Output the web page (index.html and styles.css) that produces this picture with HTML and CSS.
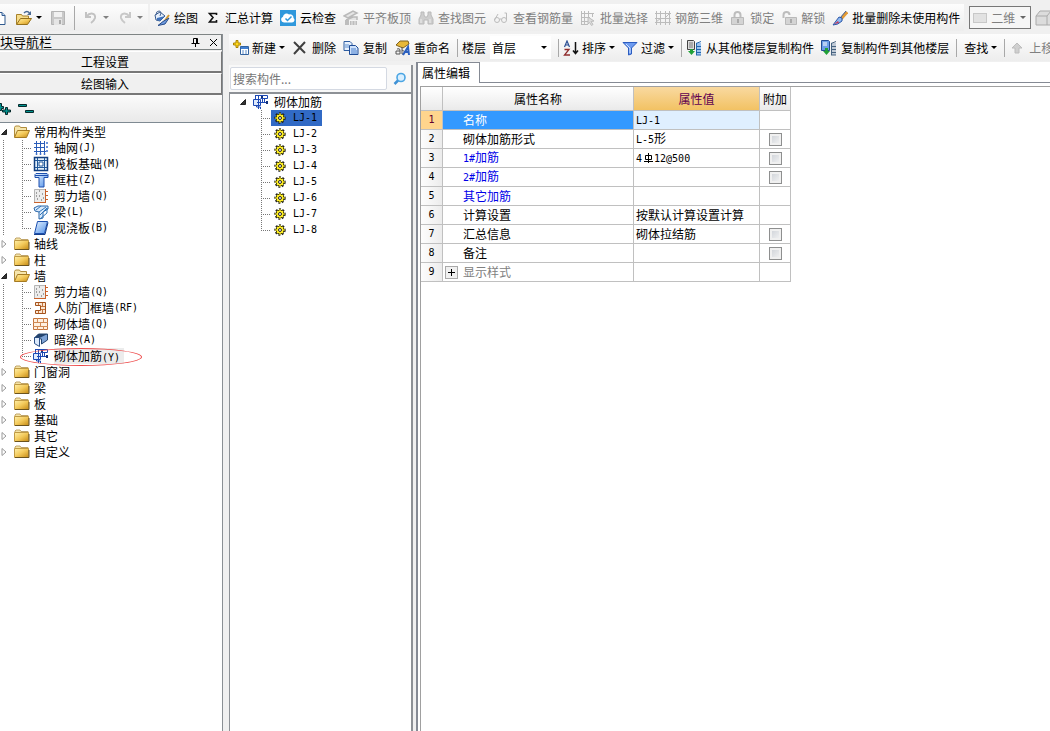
FILE: index.html
```
<!DOCTYPE html>
<html lang="zh-CN">
<head>
<meta charset="utf-8">
<title>属性编辑</title>
<link rel="stylesheet" href="styles.css">
</head>
<body>
<svg class="defs" aria-hidden="true">
  <defs>
    <linearGradient id="gold" x1="0" y1="0" x2="1" y2="1"><stop offset="0" stop-color="#fff0a8"/><stop offset=".5" stop-color="#f3c95a"/><stop offset="1" stop-color="#c58a14"/></linearGradient>
    <linearGradient id="blue" x1="0" y1="0" x2="1" y2="1"><stop offset="0" stop-color="#e8f4ff"/><stop offset="1" stop-color="#4f8fe8"/></linearGradient>
  </defs>
  <symbol id="folder" viewBox="0 0 16 16"><path d="M1 4.500V3l1-1h4l1 1.500h7v2z" fill="#f4e3a4" stroke="#c0a468"/><path d="M.5 4.500h14v9H.5z" fill="url(#gold)" stroke="#c09a44"/><path d="M1 13.500h14V6" stroke="#6b531e" fill="none"/></symbol>
  <symbol id="folder-open" viewBox="0 0 16 16"><path d="M.5 13V3.500l1-1.500h4l1 1.500h6v3" fill="#f6e6ae" stroke="#b08c3c"/><path d="M.5 13.500l3-7h12l-3 7z" fill="url(#gold)" stroke="#a57a22"/></symbol>
  <symbol id="file-open" viewBox="0 0 16 16"><path d="M.5 14V4.500h5l1 1.500h6v3" fill="#f6dc8a" stroke="#a8822a"/><path d="M.5 14.500l4-6h11l-4 6z" fill="url(#gold)" stroke="#94701c"/><path d="M8 3q3-3 5.500 0" fill="none" stroke="#4a6a94" stroke-width="1.500"/><path d="M15 1v4h-4z" fill="#4a6a94"/></symbol>
  <symbol id="doc" viewBox="8 0 8 16"><path d="M0 2.500h10l3 3v9H0z" fill="#fff" stroke="#315a8f"/><path d="M10 2.500v3h3" fill="#b9d2ee" stroke="#315a8f"/></symbol>
  <symbol id="save" viewBox="0 0 16 16"><path d="M1.500 1.500h13v13h-13z" fill="#c9c9c9" stroke="#b5b5b5"/><path d="M4 2h8v5H4z" fill="#f1f1f1"/><path d="M4 9h8v6H4z" fill="#e5e5e5"/><path d="M9 10h2v4H9z" fill="#aaa"/></symbol>
  <symbol id="undo" viewBox="0 0 16 16"><path d="M3 2v5h5M3.500 6.500C7 2 13 3 12 8q-1 3-4 5" fill="none" stroke="#c2c2c2" stroke-width="2"/></symbol>
  <symbol id="redo" viewBox="0 0 16 16"><path d="M13 2v5H8M12.500 6.500C9 2 3 3 4 8q1 3 4 5" fill="none" stroke="#c8c8c8" stroke-width="2"/></symbol>
  <symbol id="paint" viewBox="0 0 16 16"><path d="M1 5l5-3 5 4-5 5-4-1z" fill="#e6effb" stroke="#35588c"/><path d="M2 5q0-4 3-4t1 5" fill="none" stroke="#4c6a98"/><path d="M3 8l8-2-5 5-3-1z" fill="#3e72bd"/><path d="M15 5l-5 7" stroke="#d39a32" stroke-width="2"/><path d="M15 8l-4 6-7 1.500 5-4z" fill="#6f9be0" stroke="#274c8a"/></symbol>
  <symbol id="sigma" viewBox="0 0 16 16"><path d="M11.500 5V3.500H4.500L8 7.500l-3.500 4.500h7v-2" fill="none" stroke="#111" stroke-width="1.600"/></symbol>
  <symbol id="cloud" viewBox="0 0 16 16"><path d="M0 0h16v16H0z" fill="#2f98dc"/><path d="M4 12.500a3 3 0 0 1-1-5.800A3.500 3.500 0 0 1 9 4.500 3.500 3.500 0 0 1 13.500 8 2.500 2.500 0 0 1 12 12.500z" fill="#fff"/><path d="M5.500 8.500l2 2 4-4" fill="none" stroke="#2f98dc" stroke-width="1.500"/></symbol>
  <symbol id="level" viewBox="0 0 16 16"><path d="M1 6l9-5 4 2-9 5zM3 10l7-3h4v3" fill="#e5e5e5" stroke="#b9b9b9" stroke-width="1.500"/><path d="M2 10h4v5H2zM7 11h7v4H7z" fill="#bdbdbd"/><path d="M9 11v4M12 11v4" stroke="#e8e8e8"/></symbol>
  <symbol id="binoc" viewBox="0 0 16 16"><path d="M3 2h3v3l1 2h2l1-2V2h3v3l2 4v5h-5v-4H6v4H1V9l2-4z" fill="#cecece" stroke="#bababa"/><path d="M3 9v4M12 9v4" stroke="#eee"/></symbol>
  <symbol id="glasses" viewBox="0 0 16 16"><circle cx="4" cy="10" r="2.500"/><circle cx="11" cy="10" r="2.500"/><path d="M6.500 9h2M1.500 10L5 4M13.500 10V3h-2"/></symbol>
  <symbol id="batch" viewBox="0 0 16 16"><path d="M1.500 1v14M4.500 1v14M1 3.500h13M1 7.500h9M1 11.500h7M1 14.500h7M8.500 1v6M12.500 3v4"/><path d="M8 7l6 4-3 .5 2 3-1.500 1-2-3L8 14z" fill="#ddd"/></symbol>
  <symbol id="grid3d" viewBox="0 0 16 16"><path d="M1.500 1v14M5.500 1v14M10.500 1v14M14.500 1v14M0 3.500h16M0 8.500h16M0 12.500h16M1 12l5-4M10 8l5-5"/></symbol>
  <symbol id="lock" viewBox="0 0 16 16"><path d="M4.500 8V5q0-3 3-3t3 3v3" fill="none" stroke="#bdbdbd" stroke-width="2"/><path d="M1.500 7.500h12v7h-12z" fill="#d4d4d4" stroke="#b9b9b9"/><path d="M7 9h2v4H7z" fill="#aaa"/></symbol>
  <symbol id="unlock" viewBox="0 0 16 16"><path d="M2.500 8V5q0-3 3-3t3 3" fill="none" stroke="#bdbdbd" stroke-width="2"/><path d="M4.500 7.500h11v7h-11z" fill="#d4d4d4" stroke="#b9b9b9"/><path d="M9 9h2v4H9z" fill="#aaa"/></symbol>
  <symbol id="brush" viewBox="0 0 16 16"><path d="M15 2L9 9" stroke="#e39a34" stroke-width="3"/><path d="M14 1L8 8" stroke="#3b62a0"/><path d="M10 8l-3-1-6 8q5 0 9-4z" fill="#8fb8f0" stroke="#2c58a8"/><path d="M2 14l4-3 1 2z" fill="#c33a5c"/></symbol>
  <symbol id="new" viewBox="0 0 16 16"><path d="M3 .5h2v2.500h2.500v2H5v2.500H3V5H.5V3H3z" fill="#ffd91e" stroke="#ab8300"/><path d="M7.500 6.500h8v8h-8z" fill="#fff" stroke="#33639f"/><path d="M8 7h7v2H8z" fill="#3f7fd2"/><path d="M9 11h2M12 11h2M9 13h2M12 13h2" stroke="#5c8dc9"/></symbol>
  <symbol id="del" viewBox="0 0 16 16"><path d="M2 2l11 11M13 2L2 14" stroke="#404040" stroke-width="2"/></symbol>
  <symbol id="copy" viewBox="0 0 16 16"><path d="M1 1.500h6l2 2v7H1z" fill="#e6f0fd" stroke="#2d5ca0"/><path d="M2 5h4M2 7h4" stroke="#5e90d0"/><path d="M6.500 5.500h6l2.500 2.500v6.500H6.500z" fill="#cfe2fb" stroke="#1f4c96"/><path d="M8 9h5M8 11h6M8 13h6" stroke="#4c80cc"/></symbol>
  <symbol id="rename" viewBox="0 0 16 16"><path d="M2 5l4-4h8l1 3-6 4-5-2z" fill="#e8b839" stroke="#7f6220"/><path d="M3 9q3-1 3 1v4M6 11H2v3h4M8 7v7h2q2-3-2-4" fill="none" stroke="#555"/><path d="M9 15l5-8 1 8M11 12h4" fill="none" stroke="#2b60c0" stroke-width="2"/></symbol>
  <symbol id="sort" viewBox="0 0 16 16"><path d="M1.500 7L4 1l2.500 6M2.500 5h3" fill="none" stroke="#2b4f94" stroke-width="1.200"/><path d="M1.500 9.500H6L1.500 15H7" fill="none" stroke="#8f2c2c" stroke-width="1.300"/><path d="M12.500 2v11M10 10.500l2.500 3 2.500-3" fill="none" stroke="#111" stroke-width="1.500"/></symbol>
  <symbol id="filter" viewBox="0 0 16 16"><path d="M1 2.500h14L9.500 8v6l-3 1V8z" fill="#6d9bf0" stroke="#2b5cc0"/><path d="M4 4l4 4v5" stroke="#d5e5ff" fill="none"/></symbol>
  <symbol id="from-floor" viewBox="0 0 16 16"><path d="M1.500.5h6l1 1v8h-7z" fill="#ddd" stroke="#444"/><path d="M3 3h4M3 5h4M3 7h4" stroke="#777"/><path d="M4 9h3v2h2l-3.500 4L2 11h2z" fill="#21a038"/><path d="M11 3h4v12h-4z" fill="#9cc2ee"/><path d="M10 3.500l5-2M10 6.500h5M10 9.500h5M10 12.500h5M10 15h5M10.500 3v12" stroke="#2367ad"/></symbol>
  <symbol id="to-floor" viewBox="0 0 16 16"><path d="M.5.500h7l1 1v9h-8z" fill="#6c9ee8" stroke="#234c94"/><path d="M2 3h4M2 5h4" stroke="#fff"/><path d="M4 8h3v3h2l-3.500 4L2 11h2z" fill="#21a038"/><path d="M11 3h4v12h-4z" fill="#c0cad6"/><path d="M10 3.500l5-2M10 6.500h5M10 9.500h5M10 12.500h5M10 15h5M10.500 3v12" stroke="#46627f"/></symbol>
  <symbol id="up" viewBox="0 0 16 16"><path d="M8 3l5 5h-3v5H6V8H3z" fill="#cfcfcf" stroke="#bcbcbc"/></symbol>
  <symbol id="cube" viewBox="0 0 16 16"><path d="M1 6l4-5h14v11l-4 3H1z" fill="#dcdcdc" stroke="#aaa"/><path d="M1 6h11v9M12 6l4-5" stroke="#aaa" fill="none"/></symbol>
  <symbol id="axis" viewBox="0 0 16 16"><path d="M3.500 1v12M7.500 1v12M11.500 1v12M1 3.500h11M1 7.500h11M1 11.500h12" stroke="#2b5db8" fill="none"/><path d="M13.500 2.500h1v1h-1zM13.500 6.500h1v1h-1zM13.500 10.500h1v1h-1zM3 13.500h1v1H3zM7 13.500h1v1H7zM11 13.500h1v1h-1z" fill="#fff" stroke="#3c6fca"/></symbol>
  <symbol id="raft" viewBox="0 0 16 16"><path d="M1.500 1.500h13v13h-13z" fill="#e4f0fb" stroke="#123f80" stroke-width="1.500"/><path d="M4.500 2v12M11.500 2v12M2 4.500h12M2 11.500h12" stroke="#1f5799"/><path d="M6 6h4v4H6z" fill="#fff" stroke="#1f5799"/></symbol>
  <symbol id="column" viewBox="0 0 16 16"><path d="M2 2.500l1-1h11l1 1v3h-4V15H6V5.500H2z" fill="url(#blue)" stroke="#1c4fae"/><path d="M2 3.500h13" stroke="#1c4fae"/></symbol>
  <symbol id="shear" viewBox="0 0 16 16"><path d="M1.500 1.500h11v13h-11z" fill="#ececec" stroke="#b5b5b5"/><path d="M3 5h1M6 8h1M9 6h1M4 11h1M8 12h1M10 10h1M6 3h1M3 8h1" stroke="#555"/><path d="M1 14.500h12M12.500 1v13M13 3.500h2M13 7.500h2M13 11.500h2" stroke="#c9622c"/></symbol>
  <symbol id="beam" viewBox="0 0 16 16"><path d="M1 4l4-2h10v3l-5 3v6l-4 1V8L2 7z" fill="#d9e9fb" stroke="#2a66a8"/><path d="M3 6l5-4M6 8l7-5M7 11l7-7M7 15l7-6V4" stroke="#3177bb" fill="none"/></symbol>
  <symbol id="slab" viewBox="0 0 16 16"><path d="M4.500 1.500h10l-3 12h-10z" fill="url(#blue)" stroke="#1c4fae"/><path d="M1 14.500h11l3-12" stroke="#173f8c" fill="none"/></symbol>
  <symbol id="frame" viewBox="0 0 16 16"><path d="M2.500 2.500h10v11h-10v-3h5v-5h-5z" fill="#fae6d2" stroke="#a4521c"/><path d="M8 6.500h4M8 9.500h4M5.500 3v2M5.500 11v2M9.500 3v3M9.500 10v3" stroke="#c4743c"/></symbol>
  <symbol id="brick" viewBox="0 0 16 16"><path d="M.5 2.500h14v11H.5z" fill="#fff0e0" stroke="#c4743c"/><path d="M0 6.500h15M0 10.500h15M4.500 2v4M10.500 2v4M7.500 6v4M4.500 10v4M10.500 10v4" stroke="#d08a54"/></symbol>
  <symbol id="hidden-beam" viewBox="0 0 16 16"><path d="M1.500 6l4-4h9v6l-6 4v-5z" fill="#7ea3d6" stroke="#24446e"/><path d="M1.500 5.500h5v9l-5-3z" fill="#dceafc" stroke="#2a4f86"/><path d="M1.500 5.500l4-3.500h9l-7 3.500z" fill="#24446e"/></symbol>
  <symbol id="masonry" viewBox="0 0 16 16"><path d="M.5 5.500h7v6h-7z" fill="#dfeafc" stroke="#1d49b4"/><path d="M2.500 1.500h12M2.500 1v4M5.500 1v14M7.500 4.500h7v-3M9.500 4v5M11.500 4v5M4 8.500h11M3.500 11v2h4v2" fill="none" stroke="#1d49b4"/><path d="M14 7v3M9 2v2" stroke="#12317c" stroke-width="2"/></symbol>
  <symbol id="gear" viewBox="0 0 12 12"><circle cx="6" cy="6" r="4.800" fill="none" stroke="#222" stroke-width="1.800" stroke-dasharray="2 1.500"/><circle cx="6" cy="6" r="4" fill="#ffee24" stroke="#4c4800"/><path d="M6 1v10M1 6h10M3 3l6 6M9 3l-6 6" stroke="#ffee24"/><circle cx="6" cy="6" r="1.500" fill="#fff" stroke="#222"/></symbol>
  <symbol id="search" viewBox="0 0 14 14"><circle cx="8" cy="5.500" r="4" fill="#d9efff" stroke="#4ba5e3" stroke-width="1.600"/><path d="M5 8.500L1.500 12" stroke="#3f92d6" stroke-width="2.500"/></symbol>
  <symbol id="exp-open" viewBox="0 0 8 8"><path d="M6.500 1.500v5h-5z" fill="#333" stroke="#222"/></symbol>
  <symbol id="exp-closed" viewBox="0 0 8 8"><path d="M2 .5L6 4 2 7.500z" fill="#fff" stroke="#999"/></symbol>
</svg>

<header class="toolbar main-toolbar">
  <div class="file-tools">
    <button class="half" aria-label="新建工程"><svg><use href="#doc"/></svg></button>
    <button class="drop" aria-label="打开"><svg><use href="#file-open"/></svg></button>
    <button aria-label="保存" disabled><svg><use href="#save"/></svg></button>
    <span class="sep"></span>
    <button class="drop" aria-label="撤销" disabled><svg><use href="#undo"/></svg></button>
    <button class="drop" aria-label="恢复" disabled><svg><use href="#redo"/></svg></button>
  </div>
  <div class="tools">
    <button><svg><use href="#paint"/></svg>绘图</button>
    <button><svg><use href="#sigma"/></svg>汇总计算</button>
    <button><svg><use href="#cloud"/></svg>云检查</button>
    <button disabled><svg><use href="#level"/></svg>平齐板顶</button>
    <button disabled><svg><use href="#binoc"/></svg>查找图元</button>
    <button disabled><svg class="line"><use href="#glasses"/></svg>查看钢筋量</button>
    <button disabled><svg class="line"><use href="#batch"/></svg>批量选择</button>
    <button disabled><svg class="line"><use href="#grid3d"/></svg>钢筋三维</button>
    <button disabled><svg><use href="#lock"/></svg>锁定</button>
    <button disabled><svg><use href="#unlock"/></svg>解锁</button>
    <button><svg><use href="#brush"/></svg>批量删除未使用构件</button>
  </div>
  <div class="view-tools">
    <span class="select view-select"><i class="swatch"></i><select aria-label="视图" disabled><option>二维</option></select></span>
    <button aria-label="三维" disabled><svg><use href="#cube"/></svg></button>
  </div>
</header>

<div class="workspace">
  <aside class="nav">
    <div class="nav-title"><h2>块导航栏</h2>
      <button aria-label="固定"><svg viewBox="0 0 9 9"><path d="M2.500 5V.5h4V5M.5 5.500h8M4.500 6v3M5.500 1v4" fill="none" stroke="#000"/></svg></button>
      <button aria-label="关闭"><svg viewBox="0 0 9 9"><path d="M1 1l7 7M8 1L1 8" fill="none" stroke="#000"/></svg></button>
    </div>
    <button class="nav-tab">工程设置</button>
    <button class="nav-tab">绘图输入</button>
    <div class="nav-tools">
      <button class="expand" aria-label="全部展开"><svg viewBox="0 0 12 14"><path d="M0 1.500h1.500v3h2v2H1.500v2H0" fill="#00938f" stroke="#05292b"/><path d="M5.500 5.500h2v2.500h3v2h-3v2.500h-2V10h-3V8h3z" fill="#00938f" stroke="#05292b"/></svg></button>
      <button aria-label="全部折叠"><svg viewBox="0 0 16 14"><path d="M.5 2.500h8v2h-8zM7.500 8.500h8v2h-8z" fill="#00938f" stroke="#05292b"/></svg></button>
    </div>
    <ul class="tree">
      <li><div class="node"><svg class="exp"><use href="#exp-open"/></svg><svg><use href="#folder-open"/></svg>常用构件类型</div>
        <ul>
          <li><svg><use href="#axis"/></svg>轴网<span class="key">(J)</span></li>
          <li><svg><use href="#raft"/></svg>筏板基础<span class="key">(M)</span></li>
          <li><svg><use href="#column"/></svg>框柱<span class="key">(Z)</span></li>
          <li><svg><use href="#shear"/></svg>剪力墙<span class="key">(Q)</span></li>
          <li><svg><use href="#beam"/></svg>梁<span class="key">(L)</span></li>
          <li><svg><use href="#slab"/></svg>现浇板<span class="key">(B)</span></li>
        </ul></li>
      <li><div class="node"><svg class="exp"><use href="#exp-closed"/></svg><svg><use href="#folder"/></svg>轴线</div></li>
      <li><div class="node"><svg class="exp"><use href="#exp-closed"/></svg><svg><use href="#folder"/></svg>柱</div></li>
      <li><div class="node"><svg class="exp"><use href="#exp-open"/></svg><svg><use href="#folder-open"/></svg>墙</div>
        <ul>
          <li><svg><use href="#shear"/></svg>剪力墙<span class="key">(Q)</span></li>
          <li><svg><use href="#frame"/></svg>人防门框墙<span class="key">(RF)</span></li>
          <li><svg><use href="#brick"/></svg>砌体墙<span class="key">(Q)</span></li>
          <li><svg><use href="#hidden-beam"/></svg>暗梁<span class="key">(A)</span></li>
          <li class="marked"><svg><use href="#masonry"/></svg><span class="current">砌体加筋<span class="key">(Y)</span></span></li>
        </ul></li>
      <li><div class="node"><svg class="exp"><use href="#exp-closed"/></svg><svg><use href="#folder"/></svg>门窗洞</div></li>
      <li><div class="node"><svg class="exp"><use href="#exp-closed"/></svg><svg><use href="#folder"/></svg>梁</div></li>
      <li><div class="node"><svg class="exp"><use href="#exp-closed"/></svg><svg><use href="#folder"/></svg>板</div></li>
      <li><div class="node"><svg class="exp"><use href="#exp-closed"/></svg><svg><use href="#folder"/></svg>基础</div></li>
      <li><div class="node"><svg class="exp"><use href="#exp-closed"/></svg><svg><use href="#folder"/></svg>其它</div></li>
      <li><div class="node"><svg class="exp"><use href="#exp-closed"/></svg><svg><use href="#folder"/></svg>自定义</div></li>
    </ul>
  </aside>

  <main class="content">
    <div class="toolbar sub-toolbar tools">
      <button class="drop"><svg><use href="#new"/></svg>新建</button>
      <button><svg><use href="#del"/></svg>删除</button>
      <button><svg><use href="#copy"/></svg>复制</button>
      <button><svg><use href="#rename"/></svg>重命名</button>
      <span class="sep"></span>
      <label class="floor">楼层<span class="select floor-select"><select><option>首层</option></select></span></label>
      <span class="sep"></span>
      <button class="drop"><svg><use href="#sort"/></svg>排序</button>
      <button class="drop"><svg><use href="#filter"/></svg>过滤</button>
      <span class="sep"></span>
      <button><svg><use href="#from-floor"/></svg>从其他楼层复制构件</button>
      <button><svg><use href="#to-floor"/></svg>复制构件到其他楼层</button>
      <span class="sep"></span>
      <button class="drop plain">查找</button>
      <span class="sep"></span>
      <button disabled><svg><use href="#up"/></svg>上移</button>
    </div>
    <div class="panels">
      <section class="components">
        <form class="search"><input type="text" placeholder="搜索构件..." aria-label="搜索构件"><button type="button" aria-label="搜索"><svg><use href="#search"/></svg></button></form>
        <div class="list">
          <div class="root"><svg class="exp"><use href="#exp-open"/></svg><svg><use href="#masonry"/></svg>砌体加筋</div>
          <ul>
            <li><span class="item selected"><svg><use href="#gear"/></svg>LJ-1</span></li>
            <li><span class="item"><svg><use href="#gear"/></svg>LJ-2</span></li>
            <li><span class="item"><svg><use href="#gear"/></svg>LJ-3</span></li>
            <li><span class="item"><svg><use href="#gear"/></svg>LJ-4</span></li>
            <li><span class="item"><svg><use href="#gear"/></svg>LJ-5</span></li>
            <li><span class="item"><svg><use href="#gear"/></svg>LJ-6</span></li>
            <li><span class="item"><svg><use href="#gear"/></svg>LJ-7</span></li>
            <li><span class="item"><svg><use href="#gear"/></svg>LJ-8</span></li>
          </ul>
        </div>
      </section>
      <section class="properties">
        <div class="tabs"><button class="tab">属性编辑</button></div>
        <div class="sheet">
          <table>
            <colgroup><col class="c-num"><col class="c-name"><col class="c-value"><col class="c-add"></colgroup>
            <thead><tr><th></th><th>属性名称</th><th class="active">属性值</th><th>附加</th></tr></thead>
            <tbody>
              <tr class="current-row"><th>1</th><td class="name">名称</td><td class="value"><span class="key">LJ-1</span></td><td></td></tr>
              <tr><th>2</th><td class="name">砌体加筋形式</td><td class="value"><span class="key">L-5</span>形</td><td><input type="checkbox" aria-label="附加 砌体加筋形式"></td></tr>
              <tr><th>3</th><td class="name link"><span class="key">1#</span>加筋</td><td class="value"><span class="key">4<svg class="rebar" viewBox="0 0 12 10"><path d="M6.500 0v10M3.500 2.500h6v4h-6zM2 8.500h9" fill="none" stroke="#000"/></svg>12@500</span></td><td><input type="checkbox" aria-label="附加 1#加筋"></td></tr>
              <tr><th>4</th><td class="name link"><span class="key">2#</span>加筋</td><td></td><td><input type="checkbox" aria-label="附加 2#加筋"></td></tr>
              <tr><th>5</th><td class="name link">其它加筋</td><td></td><td></td></tr>
              <tr><th>6</th><td class="name">计算设置</td><td class="value">按默认计算设置计算</td><td></td></tr>
              <tr><th>7</th><td class="name">汇总信息</td><td class="value">砌体拉结筋</td><td><input type="checkbox" aria-label="附加 汇总信息"></td></tr>
              <tr><th>8</th><td class="name">备注</td><td></td><td><input type="checkbox" aria-label="附加 备注"></td></tr>
              <tr><th>9</th><td class="name group"><div class="group-row"><button class="plus" aria-label="展开显示样式"><svg viewBox="0 0 11 11"><path d="M5.500 2v7M2 5.500h7" stroke="#000"/></svg></button>显示样式</div></td><td></td><td></td></tr>
            </tbody>
          </table>
        </div>
      </section>
    </div>
  </main>
</div>
</body>
</html>
```
FILE: styles.css
```
* { box-sizing: border-box; }
body {
  margin: 0;
  height: 100vh;
  padding-top: 4px;
  display: flex;
  flex-direction: column;
  gap: 3px;
  overflow: hidden;
  background: #f0f0f0;
  color: #000;
  font: 12px/16px "Noto Sans CJK SC", sans-serif;
}
.defs { position: absolute; width: 0; height: 0; }
svg { width: 16px; height: 16px; flex: none; }
ul { list-style: none; margin: 0; padding: 0; }
button, select, input { font: inherit; color: inherit; }
button { border: 0; padding: 0; background: none; white-space: nowrap; }
button:disabled, select:disabled { color: #808080; opacity: 1; }
.key { font: 10px/16px "DejaVu Sans Mono", monospace; }
.line { fill: none; stroke: #bcbcbc; }

/* toolbars */
.toolbar { display: flex; align-items: center; height: 27px; flex: none; }
.toolbar button { display: flex; align-items: center; gap: 4px; flex: none; }
.sep { width: 1px; height: 18px; background: #a8a8a8; flex: none; }
.main-toolbar { gap: 2px; }
.file-tools, .tools {
  height: 27px;
  display: flex;
  align-items: center;
  background: linear-gradient(#fdfdfd, #ededed);
}
.file-tools { width: 148px; gap: 8px; flex: none; }
.file-tools .sep { height: 24px; }
.half svg { width: 8px; }
.drop::after, .select::after {
  content: "";
  border: 3px solid transparent;
  border-top-color: currentColor;
  border-bottom: 0;
}
.tools { gap: 7px; padding: 0 4px; }
.sub-toolbar { overflow: hidden; }
.sub-toolbar .drop { gap: 3px; }
.sub-toolbar .sep { margin-right: -3px; }
.plain { padding-left: 3px; }
.view-tools { display: flex; align-items: center; gap: 4px; margin-left: 3px; }
.select { position: relative; display: flex; align-items: center; }
.select::after { position: absolute; right: 4px; pointer-events: none; }
.select select { appearance: none; border: 0; background: none; padding: 0; width: 100%; height: 100%; }
.view-select { width: 62px; height: 23px; padding-left: 3px; gap: 4px; border: 1px solid #777; background: #f6f6f6; color: #666; }
.swatch { width: 14px; height: 10px; flex: none; background: #e2e2e2; border: 1px solid #c8c8c8; }
.floor { display: flex; align-items: center; gap: 4px; flex: none; }
.floor-select { width: 61px; height: 23px; background: #fff; padding-left: 2px; }

.workspace { flex: 1; display: flex; gap: 6px; min-height: 0; }

/* module navigation */
.nav { width: 223px; flex: none; display: flex; flex-direction: column; border-right: 1px solid #8a8f94; }
.nav-title { display: flex; align-items: center; gap: 9px; height: 16px; padding-right: 3px; border: 1px solid #7e8484; border-left: 0; flex: none; }
.nav-title h2 { margin: 0; flex: 1; font-size: 13px; font-weight: 400; line-height: 14px; }
.nav-title button { display: flex; }
.nav-title svg { width: 9px; height: 9px; }
.nav-tab { height: 22px; flex: none; padding-right: 11px; border-top: 1px solid #fff; border-bottom: 2px solid #777; border-right: 1px solid #777; }
.nav-title + .nav-tab { margin-top: 1px; }
.nav-tools { display: flex; align-items: center; gap: 6px; height: 27px; flex: none; background: linear-gradient(#fbfbfb, #e9e9e9); }
.nav-tools button { display: flex; }
.nav-tools svg { height: 14px; }
.nav-tools .expand svg { width: 12px; }
.tree { flex: 1; padding-top: 1px; background: #fff; border-top: 1px solid #7f8a92; }
.node { display: flex; align-items: center; height: 16px; }
.exp { width: 8px; height: 8px; }
.node .exp { margin-right: 3px; }
.node svg + svg { margin: 0 4px 0 3px; }
.tree li ul {
  padding-left: 22px;
  background:
    repeating-linear-gradient(#777 0 1px, transparent 1px 2px) 3px 0 / 1px 100% no-repeat,
    repeating-linear-gradient(#777 0 1px, transparent 1px 2px) 22px 0 / 1px calc(100% - 8px) no-repeat;
}
.tree li li { position: relative; display: flex; align-items: center; height: 16px; }
.tree li li::before, .list li::before {
  content: "";
  width: 10px;
  height: 1px;
  background: repeating-linear-gradient(90deg, #777 0 1px, transparent 1px 2px);
}
.tree li li svg { margin: 0 5px 0 1px; }
.current { background: #ececec; padding-right: 4px; height: 16px; }
.marked::after {
  content: "";
  position: absolute;
  left: 20px;
  top: 0;
  width: 120px;
  height: 16px;
  border: 1px solid #ee4a4a;
  border-radius: 50%;
}
.tree li .marked::after { left: -2px; }

/* content */
.content { flex: 1; min-width: 0; display: flex; flex-direction: column; }
.panels { flex: 1; display: flex; gap: 3px; min-height: 0; padding-top: 1px; }
.components { width: 184px; flex: none; margin-top: 3px; display: flex; flex-direction: column; border-right: 2px solid #8d9196; background: #fff; }
.search { display: flex; align-items: center; gap: 6px; height: 27px; padding-left: 1px; background: #f8f8f8; flex: none; }
.search input { width: 157px; height: 23px; padding: 0 2px; border: 1px solid #d4d9e2; border-radius: 2px; background: #fff; outline: 0; }
.search input::placeholder { color: #777; opacity: 1; }
.search button { display: flex; }
.search svg { width: 14px; height: 14px; }
.list { flex: 1; border-top: 2px solid #8d9196; border-left: 1px solid #8d9196; background: #fff; }
.root { display: flex; align-items: center; height: 16px; padding-left: 9px; }
.root svg + svg { margin: 0 5px 0 6px; }
.list ul {
  padding-left: 31px;
  background: repeating-linear-gradient(#777 0 1px, transparent 1px 2px) 31px 0 / 1px calc(100% - 8px) no-repeat;
}
.list li { display: flex; align-items: center; height: 16px; }
.item { display: flex; align-items: center; gap: 7px; height: 16px; padding: 0 5px 0 3px; font: 10px/16px "DejaVu Sans Mono", monospace; }
.item svg { width: 12px; height: 12px; }
.selected { background: #316ac5; }

/* property editor */
.properties { flex: 1; min-width: 0; display: flex; flex-direction: column; border-left: 2px solid #858a94; background: #fff; }
.tabs { display: flex; height: 21px; flex: none; }
.tabs::after { content: ""; flex: 1; border-bottom: 1px solid #858a94; }
.tab { width: 62px; padding-right: 5px; border-top: 1px solid #858a94; border-right: 1px solid #858a94; text-align: center; background: #fff; }
.sheet { flex: 1; margin: 3px 0 0 2px; border-top: 1px solid #a0a0a0; border-left: 1px solid #a0a0a0; }
table { border-collapse: separate; border-spacing: 0; table-layout: fixed; width: 370px; }
.c-num { width: 22px; }
.c-name { width: 191px; }
.c-value { width: 126px; }
.c-add { width: 31px; }
th, td { height: 19px; padding: 0; border-right: 1px solid #c0c0c0; border-bottom: 1px solid #c0c0c0; font-weight: 400; line-height: 16px; white-space: nowrap; }
th { background: linear-gradient(#fff, #eaeaea); text-align: center; }
thead th { height: 24px; }
tbody th { font: 10px/16px "DejaVu Sans Mono", monospace; background: linear-gradient(90deg, #fdfdfd, #ececec); }
thead .active { background: linear-gradient(#f9d9a0, #f2c263); color: #600050; }
.name { padding-left: 20px; }
.value { padding-left: 2px; }
.link { color: #0000e8; }
.current-row th { background: #ffd58d; color: #600030; }
.current-row .name { background: #3399ff; color: #fff; }
.current-row .value { background: #dfefff; }
.rebar { width: 12px; height: 10px; vertical-align: -1px; }
td input { display: block; appearance: none; width: 13px; height: 13px; margin: 0 auto; border: 1px solid #8e8f8f; background: linear-gradient(135deg, #cbcfd5, #f6f6f6); box-shadow: inset 0 0 0 2px #f0f0f0; }
.name.group { padding-left: 2px; color: #808080; }
.group-row { display: flex; align-items: center; gap: 5px; }
.plus { display: flex; align-items: center; justify-content: center; width: 13px; height: 13px; border: 1px solid #aaa; background: #f0f0f0; }
.plus svg { width: 11px; height: 11px; }
```
